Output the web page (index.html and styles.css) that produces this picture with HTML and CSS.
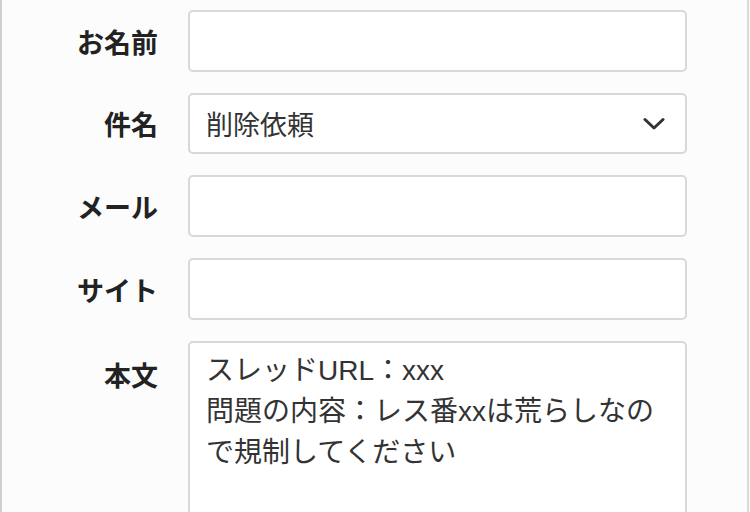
FILE: index.html
```html
<!DOCTYPE html>
<html lang="ja">
<head>
<meta charset="utf-8">
<link rel="stylesheet" href="styles.css">
</head>
<body>
<div class="page">
  <form class="form">
    <label class="label">お名前</label>
    <div class="field"></div>
    <label class="label">件名</label>
    <div class="field select"><span>削除依頼</span>
      <svg class="chev" width="22" height="14" viewBox="0 0 22 14"><path d="M2 2.5 L11 11 L20 2.5" fill="none" stroke="#333" stroke-width="3" stroke-linecap="round" stroke-linejoin="round"/></svg>
    </div>
    <label class="label">メール</label>
    <div class="field"></div>
    <label class="label">サイト</label>
    <div class="field"></div>
    <label class="label top">本文</label>
    <div class="field area">スレッドURL：xxx<br>問題の内容：レス番xxは荒らしなので規制してください</div>
  </form>
</div>
</body>
</html>
```
FILE: styles.css
```css
html, body {
  margin: 0;
  padding: 0;
  background: #fcfcfc;
}
.page {
  width: 749px;
  height: 512px;
  box-sizing: border-box;
  border-left: 2px solid #cfcfcf;
  border-right: 2px solid #d9d9d9;
  background: #fcfcfc;
  overflow: hidden;
  font-family: "Liberation Sans", "Noto Sans CJK JP", sans-serif;
}
.form {
  display: grid;
  grid-template-columns: 156px 499px;
  column-gap: 30px;
  row-gap: 21px;
  padding-top: 10px;
}
.label {
  font-family: "Noto Sans CJK JP", sans-serif;
  font-size: 27px;
  font-weight: 700;
  color: #222;
  text-align: right;
  align-self: center;
  line-height: 1;
}
.label.top {
  align-self: start;
  padding-top: 20px;
}
.field {
  height: 62px;
  box-sizing: border-box;
  border: 2px solid #d8d8dc;
  border-radius: 5px;
  background: #fff;
}
.select {
  height: 61px;
  display: flex;
  align-items: center;
  justify-content: space-between;
  padding: 0 20px 0 16px;
  font-family: "Noto Sans CJK JP", sans-serif;
  font-size: 27px;
  color: #333;
}
.area {
  height: 220px;
  padding: 7px 16px;
  font-size: 28px;
  line-height: 41px;
  color: #333;
}
.chev {
  display: block;
}
```
